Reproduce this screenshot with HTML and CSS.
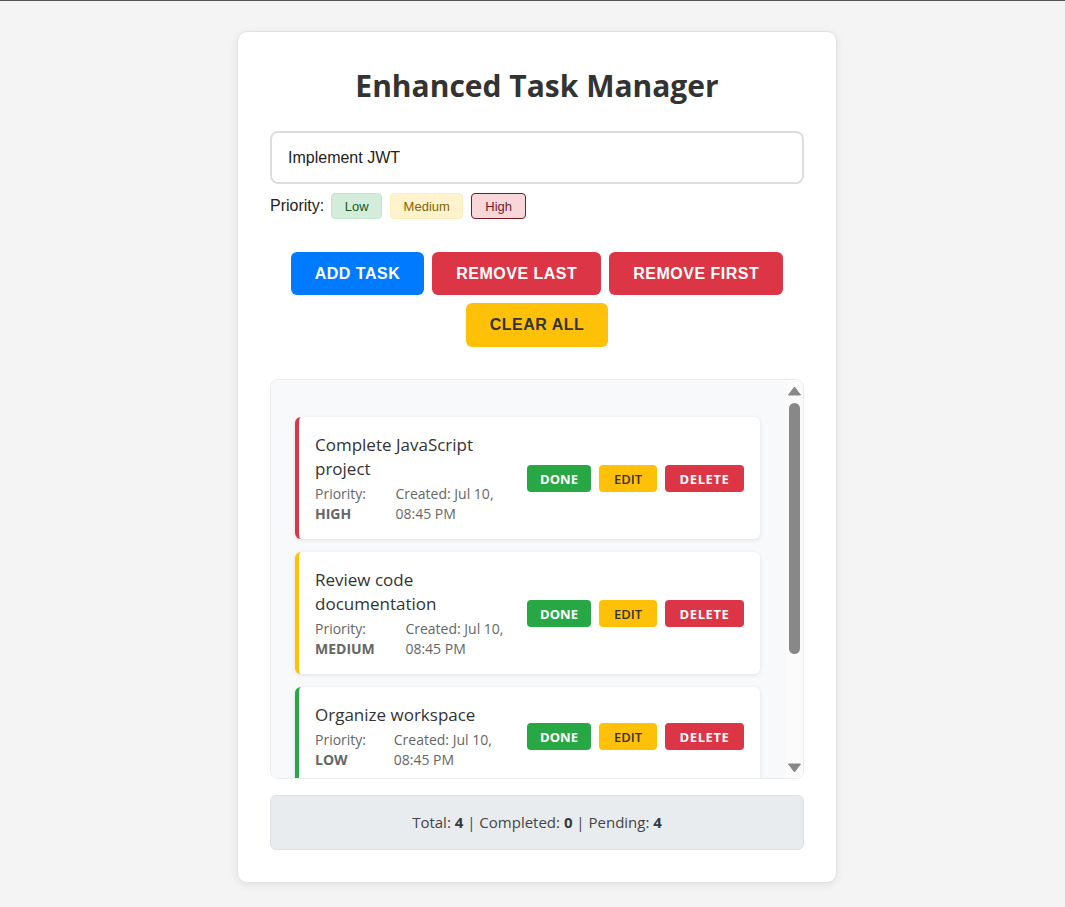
FILE: index.html
```html
<!DOCTYPE html>
<html lang="en">
<head>
<meta charset="utf-8">
<title>Enhanced Task Manager</title>
<link rel="stylesheet" href="styles.css">
</head>
<body>
<div class="container">
  <h1 class="title">Enhanced Task Manager</h1>
  <input class="task-input" type="text" value="Implement JWT">
  <div class="priority-row">
    <span class="priority-label">Priority:</span>
    <button class="badge badge-low">Low</button>
    <button class="badge badge-medium">Medium</button>
    <button class="badge badge-high is-selected">High</button>
  </div>
  <div class="actions">
    <button class="btn btn-blue">ADD TASK</button>
    <button class="btn btn-red">REMOVE LAST</button>
    <button class="btn btn-red">REMOVE FIRST</button>
    <button class="btn btn-yellow">CLEAR ALL</button>
  </div>
  <div class="list-wrap">
    <div class="task-list">
      <div class="task task-high">
        <div class="task-info">
          <div class="task-title">Complete JavaScript project</div>
          <div class="task-meta">
            <span class="meta-priority">Priority: <strong>HIGH</strong></span>
            <span class="meta-date">Created: Jul 10, 08:45 PM</span>
          </div>
        </div>
        <div class="task-actions">
          <button class="sm sm-done">DONE</button>
          <button class="sm sm-edit">EDIT</button>
          <button class="sm sm-delete">DELETE</button>
        </div>
      </div>
      <div class="task task-medium">
        <div class="task-info">
          <div class="task-title">Review code documentation</div>
          <div class="task-meta">
            <span class="meta-priority">Priority: <strong>MEDIUM</strong></span>
            <span class="meta-date">Created: Jul 10, 08:45 PM</span>
          </div>
        </div>
        <div class="task-actions">
          <button class="sm sm-done">DONE</button>
          <button class="sm sm-edit">EDIT</button>
          <button class="sm sm-delete">DELETE</button>
        </div>
      </div>
      <div class="task task-low">
        <div class="task-info">
          <div class="task-title">Organize workspace</div>
          <div class="task-meta">
            <span class="meta-priority">Priority: <strong>LOW</strong></span>
            <span class="meta-date">Created: Jul 10, 08:45 PM</span>
          </div>
        </div>
        <div class="task-actions">
          <button class="sm sm-done">DONE</button>
          <button class="sm sm-edit">EDIT</button>
          <button class="sm sm-delete">DELETE</button>
        </div>
      </div>
      <div class="task task-high">
        <div class="task-info">
          <div class="task-title">Implement JWT</div>
          <div class="task-meta">
            <span class="meta-priority">Priority: <strong>HIGH</strong></span>
            <span class="meta-date">Created: Jul 10, 08:45 PM</span>
          </div>
        </div>
        <div class="task-actions">
          <button class="sm sm-done">DONE</button>
          <button class="sm sm-edit">EDIT</button>
          <button class="sm sm-delete">DELETE</button>
        </div>
      </div>
    </div>
    <div class="scrollbar" aria-hidden="true">
      <svg class="sb-arrow" width="17" height="17" viewBox="0 0 17 17"><polygon points="2.5,15 14.5,15 8.5,7" fill="#888" stroke="#888" stroke-width="1" stroke-linejoin="round"/></svg>
      <div class="sb-track"><div class="sb-thumb"></div></div>
      <svg class="sb-arrow" width="17" height="17" viewBox="0 0 17 17"><polygon points="2.5,3 14.5,3 8.5,11" fill="#888" stroke="#888" stroke-width="1" stroke-linejoin="round"/></svg>
    </div>
  </div>
  <div class="stats">Total: <strong>4</strong> | Completed: <strong>0</strong> | Pending: <strong>4</strong></div>
</div>
</body>
</html>
```

FILE: styles.css
```css
html, body {
  margin: 0;
  padding: 0;
}
body {
  background: #f4f4f4;
  border-top: 1px solid #555;
  padding: 30px 20px 24px 29px;
  font-family: "Open Sans", "Noto Sans", sans-serif;
  color: #333;
}
.container {
  width: 600px;
  box-sizing: border-box;
  margin: 0 auto;
  background: #fff;
  border: 1px solid #e2e2e2;
  border-radius: 10px;
  box-shadow: 0 2px 8px rgba(0, 0, 0, 0.08);
  padding: 32px 32px 32px;
  display: flex;
  flex-direction: column;
}
.title {
  margin: 0 0 23px;
  font-size: 30px;
  line-height: 44px;
  font-weight: 700;
  text-align: center;
  color: #333;
}
.task-input {
  box-sizing: border-box;
  width: 100%;
  height: 53px;
  padding: 0 16px;
  border: 2px solid #ddd;
  border-radius: 8px;
  font-family: "Liberation Sans", Arial, sans-serif;
  font-size: 16px;
  color: #222;
  outline: none;
}
.priority-row {
  display: flex;
  align-items: center;
  gap: 8px;
  margin-top: 9px;
  font-family: "Liberation Sans", Arial, sans-serif;
}
.priority-label {
  font-size: 16px;
  color: #222;
  margin-right: -1px;
}
.badge {
  font-family: "Liberation Sans", Arial, sans-serif;
  font-size: 13px;
  height: 26px;
  padding: 0 12.5px;
  border-radius: 4px;
  border: 1px solid transparent;
  cursor: pointer;
}
.badge-low { background: #d4edda; color: #155724; border-color: #c3e6cb; }
.badge-medium { background: #fff3cd; color: #856404; border-color: #ffeeba; }
.badge-high { background: #f8d7da; color: #721c24; border-color: #f5c6cb; padding: 0 13px; }
.badge-high.is-selected { border-color: #721c24; }

.actions {
  display: flex;
  flex-wrap: wrap;
  justify-content: center;
  gap: 8px;
  margin: 33px 0 32px;
}
.btn {
  font-family: "Liberation Sans", Arial, sans-serif;
  font-size: 16px;
  font-weight: 700;
  letter-spacing: 0.5px;
  height: 43px;
  padding: 0 24px;
  border: none;
  border-radius: 6px;
  color: #fff;
  cursor: pointer;
}
.btn-blue { background: #007bff; }
.btn-red { background: #dc3545; }
.btn-yellow { background: #ffc107; color: #333; height: 44px; }

.list-wrap {
  position: relative;
}
.task-list {
  box-sizing: border-box;
  height: 400px;
  overflow-y: auto;
  scrollbar-width: none;
  background: #f8f9fa;
  border: 1px solid #e9ecef;
  border-radius: 8px;
  padding: 37px 43px 20px 24px;
  display: flex;
  flex-direction: column;
  gap: 13px;
}
.task-list::-webkit-scrollbar { display: none; }

.scrollbar {
  position: absolute;
  top: 1px;
  right: 1px;
  bottom: 1px;
  width: 17px;
  background: #fbfbfb;
  border-radius: 0 7px 7px 0;
  display: flex;
  flex-direction: column;
  align-items: center;
}
.sb-arrow {
  display: block;
  flex-shrink: 0;
}
.sb-track {
  flex: 1;
  width: 100%;
  display: flex;
  justify-content: center;
  padding-top: 6px;
}
.sb-thumb {
  width: 11px;
  height: 251px;
  background: #888;
  border-radius: 6px;
}

.task {
  flex-shrink: 0;
  display: flex;
  align-items: center;
  gap: 15px;
  background: #fff;
  border-left: 4px solid #dc3545;
  border-radius: 6px;
  box-shadow: 0 1px 4px rgba(0, 0, 0, 0.1);
  padding: 16px 16px 15px;
}
.task-high { border-left-color: #dc3545; }
.task-medium { border-left-color: #ffc107; }
.task-low { border-left-color: #28a745; }
.task-info {
  flex: 1;
  min-width: 0;
}
.task-title {
  font-size: 17px;
  line-height: 24px;
  font-weight: 500;
  color: #333;
}
.task-meta {
  display: flex;
  gap: 15px;
  margin-top: 3px;
  font-size: 14px;
  line-height: 20px;
  color: #666;
}
.task-meta strong { font-weight: 700; }
.task-actions {
  display: flex;
  gap: 8px;
  flex-shrink: 0;
}
.sm {
  font-family: "Open Sans", "Noto Sans", sans-serif;
  font-size: 13px;
  font-weight: 700;
  height: 27px;
  padding: 0 13px;
  border: none;
  border-radius: 4px;
  color: #fff;
  cursor: pointer;
}
.sm-done { background: #28a745; }
.sm-edit { background: #ffc107; color: #333; font-weight: 600; padding: 0 15px; }
.sm-delete { background: #dc3545; letter-spacing: 0.6px; padding: 0 14.5px; }

.stats {
  margin-top: 16px;
  background: #e9ecef;
  border: 1px solid #dee2e6;
  border-radius: 6px;
  padding: 16px 16px 17px;
  text-align: center;
  font-size: 15px;
  line-height: 20px;
  color: #444;
}
.stats strong { color: #343a40; }
```
